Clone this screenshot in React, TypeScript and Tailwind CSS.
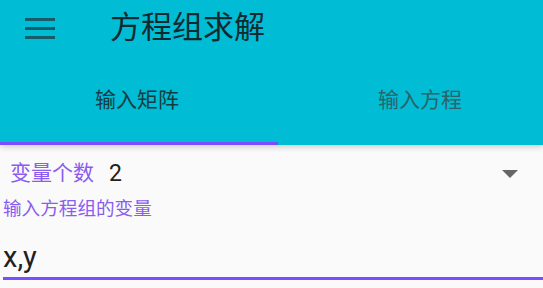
const font = { fontFamily: '"Roboto", "Noto Sans CJK SC", sans-serif' };

function MenuIcon() {
  return (
    <svg width="30" height="21" viewBox="0 0 30 21" className="block">
      <rect x="0" y="0" width="30" height="3" fill="#175d69" />
      <rect x="0" y="9" width="30" height="3" fill="#175d69" />
      <rect x="0" y="18" width="30" height="3" fill="#175d69" />
    </svg>
  );
}

export default function App() {
  return (
    <div className="w-[543px] h-[288px] overflow-hidden bg-[#fafafa]" style={font}>
      <div className="bg-[#00bcd4] shadow-[0_2px_6px_rgba(0,0,0,0.18)] relative">
        <div className="h-[55px] flex items-center">
          <div className="pl-[25px] pt-[2px]">
            <MenuIcon />
          </div>
          <h1 className="ml-[55px] text-[31px] leading-none text-[#102a30]">方程组求解</h1>
        </div>
        <div className="flex h-[90px] overflow-hidden">
          <div className="w-[278px] shrink-0 flex flex-col">
            <div className="flex-1 flex items-center justify-center pr-[4px] pt-[4px] text-[21px] text-[#173b42]">
              输入矩阵
            </div>
            <div className="h-[3px] bg-[#7c4dff]" />
          </div>
          <div className="w-[284px] shrink-0 flex items-center justify-center pt-[4px] pb-[3px] text-[21px] text-[#2c636b]">
            输入方程
          </div>
        </div>
      </div>

      <div className="flex items-center h-[42px] pt-[14px]">
        <span className="ml-[10px] text-[21px] leading-none text-[#8a5cf0]">变量个数</span>
        <span className="ml-[15px] text-[23px] leading-none text-[#212121]">2</span>
        <svg width="16" height="9" viewBox="0 0 16 9" className="ml-auto mr-[25px] mt-[2px]">
          <path d="M0 0 L16 0 L8 8 Z" fill="#666666" />
        </svg>
      </div>

      <div className="px-[3px] mt-[13px] flex flex-col">
        <span className="text-[18.6px] leading-none text-[#8a5cf0]">输入方程组的变量</span>
        <span className="mt-[24px] text-[29px] leading-none text-[#212121]">x,y</span>
        <div className="mt-[5px] h-[3px] bg-[#7c4dff] -mr-[3px]" />
      </div>
    </div>
  );
}
